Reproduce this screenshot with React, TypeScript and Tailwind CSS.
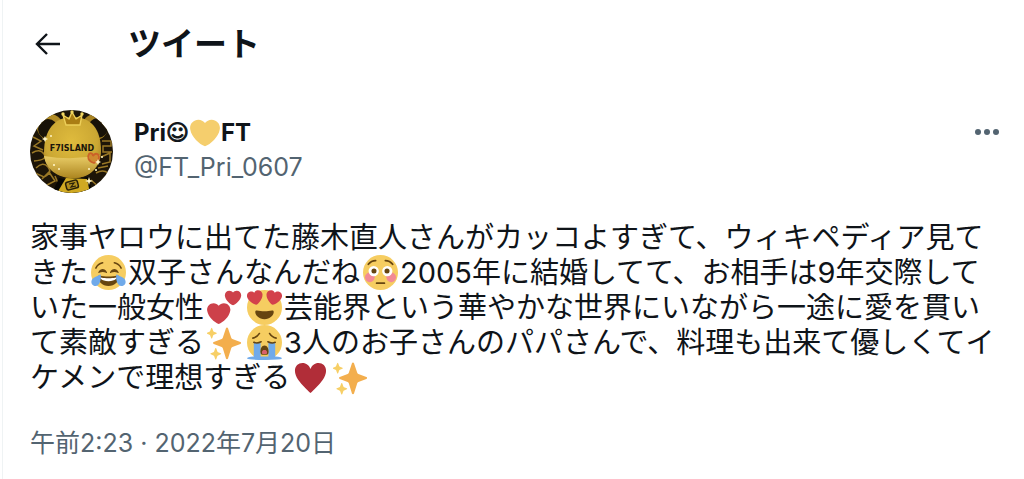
import type { ReactNode } from 'react';

const HEART =
  'M35.885 11.833c0-5.45-4.418-9.868-9.867-9.868-3.308 0-6.227 1.633-8.018 4.129-1.791-2.496-4.71-4.129-8.017-4.129-5.45 0-9.868 4.417-9.868 9.868 0 .772.098 1.52.266 2.241C1.751 22.587 11.216 31.568 18 34.034c6.783-2.466 16.249-11.447 17.617-19.959.17-.721.268-1.469.268-2.242z';

function Emoji({ label, small = false, children }: { label: string; small?: boolean; children: ReactNode }) {
  return (
    <svg
      role="img"
      aria-label={label}
      viewBox="0 0 36 36"
      className={
        small ? 'mx-px inline-block size-[30px] align-middle' : 'mr-[2px] ml-[3px] inline-block size-[35px] align-top'
      }
    >
      {children}
    </svg>
  );
}

function Face() {
  return <circle cx="18" cy="18" r="18" fill="#f6cd61" />;
}

function Joy() {
  return (
    <Emoji label="😂">
      <Face />
      <path
        fill="#664510"
        d="M28.457 17.797c-.06-.135-1.499-3.297-4.457-3.297-2.957 0-4.397 3.162-4.457 3.297-.092.207-.032.449.145.591.175.142.426.147.61.014.012-.009 1.262-.902 3.702-.902 2.426 0 3.674.881 3.702.901.088.066.194.099.298.099.11 0 .221-.037.312-.109.177-.142.238-.386.145-.594zm-12 0c-.06-.135-1.499-3.297-4.457-3.297-2.957 0-4.397 3.162-4.457 3.297-.092.207-.032.449.144.591.176.142.427.147.61.014.013-.009 1.262-.902 3.703-.902 2.426 0 3.674.881 3.702.901.089.066.194.099.298.099.11 0 .221-.037.312-.109.178-.142.237-.386.145-.594zM18 22c-3.623 0-6.027-.422-9-1-.679-.131-2 0-2 2 0 4 4.595 9 11 9 6.404 0 11-5 11-9 0-2-1.321-2.132-2-2-2.973.578-5.377 1-9 1z"
      />
      <path fill="#fff" d="M9 23s3 1 9 1 9-1 9-1-1.5 4-9 4-9-4-9-4z" />
      <path fill="none" stroke="#664510" strokeWidth="1.6" strokeLinecap="round" d="M5 13.5q2-4.5 7-5.5M31 13.5q-2-4.5-7-5.5" />
      <path
        fill="#70aaea"
        d="M9.8 19.8c.8 3 .2 8.400-2.200 10.900-2 2-5.200 1.400-6.500-.6-1.400-2.200-.700-4.800 1.500-6.500 2-1.500 4.900-2 7.200-3.800zM26.200 19.800c-.8 3-.2 8.400 2.200 10.900 2 2 5.200 1.400 6.500-.6 1.400-2.200.7-4.800-1.500-6.500-2-1.500-4.900-2-7.200-3.800z"
      />
    </Emoji>
  );
}

function Flushed() {
  return (
    <Emoji label="😳">
      <Face />
      <circle cx="7" cy="23" r="5" fill="#f28a95" />
      <circle cx="29" cy="23" r="5" fill="#f28a95" />
      <circle cx="11" cy="16.500" r="5.300" fill="#fff" />
      <circle cx="25" cy="16.500" r="5.300" fill="#fff" />
      <circle cx="11.300" cy="16.500" r="2.600" fill="#664510" />
      <circle cx="24.700" cy="16.500" r="2.600" fill="#664510" />
      <path fill="none" stroke="#664510" strokeWidth="1.800" strokeLinecap="round" d="M5.500 9.500q3-3.800 7.500-3.800M30.500 9.500q-3-3.800-7.500-3.800M14 29h8" />
    </Emoji>
  );
}

function TwoHearts() {
  return (
    <Emoji label="💕">
      <g fill="#cd414a">
        <path transform="translate(0 12.200) scale(.67)" d={HEART} />
        <path transform="translate(18.300 -.2) scale(.47)" d={HEART} />
      </g>
    </Emoji>
  );
}

function HeartEyes() {
  return (
    <Emoji label="😍">
      <Face />
      <g fill="#d3414b">
        <path transform="translate(.3 0) rotate(-10 8 8) scale(.45)" d={HEART} />
        <path transform="translate(19.500 0) rotate(10 8 8) scale(.45)" d={HEART} />
      </g>
      <path
        fill="#664510"
        d="M18 21.800c-3 0-5.200-.3-7.800-.8-.7-.1-1.700 0-1.700 1.700 0 3.500 4 7.300 9.500 7.300s9.500-3.800 9.500-7.300c0-1.700-1-1.800-1.700-1.700-2.600.5-4.800.8-7.800.8z"
      />
    </Emoji>
  );
}

function Sparkles() {
  return (
    <Emoji label="✨">
      <path
        fill="#f3ae4d"
        d="m34.350 17.510-8.240-3.090a2 2 0 0 1-1.180-1.230L21.600 3.400a1.100 1.100 0 0 0-2.100 0l-3.250 9.790a2 2 0 0 1-1.180 1.230l-8.160 3.090a1.050 1.050 0 0 0 0 1.970l8.160 3.100a2 2 0 0 1 1.180 1.230l3.250 10.690a1.100 1.100 0 0 0 2.100 0l3.330-10.690a2 2 0 0 1 1.180-1.230l8.240-3.100a1.050 1.050 0 0 0 0-1.970z"
      />
      <path
        fill="#f7cf66"
        d="m5.300 3.300 1.100 2.900q.2.500.7.700l2.600 1q.8.500 0 1l-2.600 1q-.5.200-.7.700l-1.100 2.900q-.5.800-1 0l-1.100-2.900q-.2-.5-.7-.7l-2.400-1q-.8-.5 0-1l2.400-1q.5-.2.7-.7l1.100-2.900q.5-.8 1 0zM9.500 24l1.200 3.200q.2.500.7.700l2.800 1.200q.8.500 0 1l-2.800 1.200q-.5.200-.7.700l-1.200 3.200q-.5.800-1 0l-1.200-3.200q-.2-.5-.7-.7l-2.700-1.200q-.8-.5 0-1l2.700-1.200q.5-.2.7-.7l1.200-3.200q.5-.8 1 0z"
      />
    </Emoji>
  );
}

function Sob() {
  return (
    <Emoji label="😭">
      <Face />
      <path fill="#70aaea" d="M7 18h7v14.500h8V18h7v14.500q7 .5 7 2Q34 36 18 36T0 34.500q0-1.500 7-2z" />
      <path fill="#664510" d="M18 21c-3 0-4.200 3.500-4.200 6.500 0 2 .8 3 1.800 3h4.800c1 0 1.800-1 1.800-3 0-3-1.200-6.500-4.200-6.500z" />
      <path fill="#d8606c" d="M18 25.500c-1.700 0-2.700 1.400-2.700 3 0 1 .6 1.300 1.300 1.300h2.800c.7 0 1.300-.3 1.300-1.300 0-1.600-1-3-2.700-3z" />
      <path
        fill="none"
        stroke="#664510"
        strokeWidth="1.600"
        strokeLinecap="round"
        d="M7 17.800q3.500 1.500 7.500-.6M29 17.800q-3.500 1.500-7.500-.6M6 13.500q4.500-.8 6.800-4.800M30 13.500q-4.500-.8-6.800-4.800"
      />
    </Emoji>
  );
}

function SuitHeart() {
  return (
    <Emoji label="♥">
      <path
        fill="#b12d38"
        d="M18 34C15 31 9 25.500 5.500 20.500 3.300 17.300 2 14 2 11 2 6 5.500 3 9.700 3c4 0 7 2.500 8.300 6.200C19.300 5.500 22.300 3 26.300 3 30.500 3 34 6 34 11c0 3-1.300 6.300-3.500 9.500C27 25.500 21 31 18 34z"
      />
    </Emoji>
  );
}

function Avatar() {
  return (
    <svg role="img" aria-label="Pri" viewBox="0 0 83 83" className="size-[83px] shrink-0">
      <defs>
        <clipPath id="round">
          <circle cx="41.500" cy="41.500" r="41.500" />
        </clipPath>
        <radialGradient id="gold" cx=".48" cy=".4" r=".65">
          <stop offset="0" stopColor="#dfbb3d" />
          <stop offset=".7" stopColor="#cba733" />
          <stop offset="1" stopColor="#a17c1f" />
        </radialGradient>
        <linearGradient id="chin" x1="0" y1="0" x2="0" y2="1">
          <stop offset="0" stopColor="#ecd06a" />
          <stop offset="1" stopColor="#ad8620" />
        </linearGradient>
      </defs>
      <g clipPath="url(#round)">
        <path fill="#1d1508" d="M0 0h83v83H0z" />
        <g fill="none" stroke="#9a7826" strokeWidth="1.500">
          <path d="M3 27l8 4-7 5 9 4M2 43q8-5 12 1t-10 7M6 58q7-7 12-1t-4 10l-9-4M12 69l7-7 6 9-8 4M25 66l5 12M72 31h9v5h-8v6h9M71 47l9-4v9l-8 2M68 58l10-2M66 63q7-4 12 0M61 70l9 8" />
        </g>
        <circle cx="20" cy="17" r="13" fill="#b18c26" />
        <circle cx="18" cy="19" r="10" fill="#181208" />
        <circle cx="65" cy="17" r="13" fill="#a88322" />
        <circle cx="68" cy="18" r="10" fill="#181208" />
        <path fill="url(#gold)" d="M14 43C14 19 25 7 43 7s28 12 28 34c0 15-10 27-27 27S14 57 14 43z" />
        <path fill="url(#chin)" d="M14 46q28 5 56-1c-2 15-12 23-27 23S16 60 14 46z" />
        <path fill="#080704" d="M29 68q13 3 29-1l5 16H22z" />
        <path fill="#d0a922" d="M27 83l9-15 21 1 3 14z" />
        <rect x="36" y="71" width="12" height="8" rx="2" transform="rotate(-15 42 75)" fill="#b18d1c" stroke="#292009" strokeWidth="1.500" />
        <path fill="none" stroke="#292009" strokeWidth="1.200" d="M39 74l5-1-3 4 5-1" />
        <path fill="#aa7d13" stroke="#edcf59" strokeWidth="1.400" strokeLinejoin="round" d="M36 15l-3-10 6 4 3-7 4 7 6-4-2 10z" />
        <g fill="#f1d662">
          <circle cx="33" cy="4" r="1.700" />
          <circle cx="42" cy="2" r="1.700" />
          <circle cx="52" cy="4" r="1.700" />
        </g>
        <text x="42" y="41" textAnchor="middle" className="fill-[#1b160a] font-['DejaVu_Sans'] text-[8px] font-bold">
          F7ISLAND
        </text>
        <path fill="#cf8a30" stroke="#cb6128" strokeWidth="1.800" d="M64 53c-6-2-7-6-5-9 2-2 4 0 4 2 2-4 6-2 6 1 0 3-2 5-5 6z" />
        <g fill="#fff5c5">
          <path d="M15 26l1 2 2 1-2 1-1 2-1-2-2-1 2-1zM68 49l1 2 2 1-2 1-1 2-1-2-2-1 2-1zM59 67l1 3 3 1-3 1-1 3-1-3-3-1 3-1z" />
          <circle cx="21" cy="26" r="1" />
          <circle cx="24" cy="55" r="1.100" />
          <circle cx="29" cy="59" r="1" />
          <circle cx="72" cy="47" r="1" />
          <circle cx="66" cy="60" r="1.100" />
          <circle cx="59" cy="59" r="1" />
        </g>
      </g>
    </svg>
  );
}

export default function App() {
  return (
    <main
      lang="ja"
      className="ml-0.5 min-h-screen border-l border-[#eff3f4] bg-white pr-6 pl-[27px] font-[Inter,'Noto_Sans_CJK_JP',sans-serif] text-[#0f1419]"
    >
      <header className="flex h-[88px] items-center gap-[66px]">
        <button type="button" aria-label="戻る" className="ml-1 flex">
          <svg viewBox="0 0 28 24" className="h-6 w-7" fill="none" stroke="currentColor" strokeWidth="2.400">
            <path d="M26 12H3M13 2 3 12l10 10" />
          </svg>
        </button>
        <h1 className="text-[33px] leading-10 font-bold">ツイート</h1>
      </header>

      <article className="pt-[22px]">
        <div className="flex items-start">
          <Avatar />
          <div className="ml-[21px] grow pt-[5px]">
            <p className="flex h-9 items-center text-2xl font-bold">
              Pri
              <span className="font-['DejaVu_Sans'] text-[22px] [-webkit-text-stroke:1px_currentColor]">☺</span>
              <Emoji label="💛" small>
                <path fill="#f5ce6d" d={HEART} />
              </Emoji>
              FT
            </p>
            <p className="h-8 text-[25px] leading-8 text-[#536471]">@FT_Pri_0607</p>
          </div>
          <button type="button" aria-label="もっと見る" className="mt-3 flex h-5 items-center text-[#536471]">
            <svg viewBox="0 0 26 8" className="h-2 w-[26px]" fill="currentColor">
              <circle cx="4" cy="4" r="3" />
              <circle cx="13" cy="4" r="3" />
              <circle cx="22" cy="4" r="3" />
            </svg>
          </button>
        </div>

        <p className="mt-[27px] text-[29px] leading-[35px]">
          家事ヤロウに出てた藤木直人さんがカッコよすぎて、ウィキペディア見てきた
          <Joy />
          双子さんなんだね
          <Flushed />
          2005年に結婚してて、お相手は9年交際していた一般女性
          <TwoHearts />
          <HeartEyes />
          芸能界という華やかな世界にいながら一途に愛を貫いて素敵すぎる
          <Sparkles />
          <Sob />
          3人のお子さんのパパさんで、料理も出来て優しくてイケメンで理想すぎる
          <SuitHeart />
          <Sparkles />
        </p>

        <p className="mt-[30px] text-[25px] leading-9 text-[#536471]">
          <time dateTime="2022-07-20T02:23">午前2:23 · 2022年7月20日</time>
        </p>
      </article>
    </main>
  );
}
